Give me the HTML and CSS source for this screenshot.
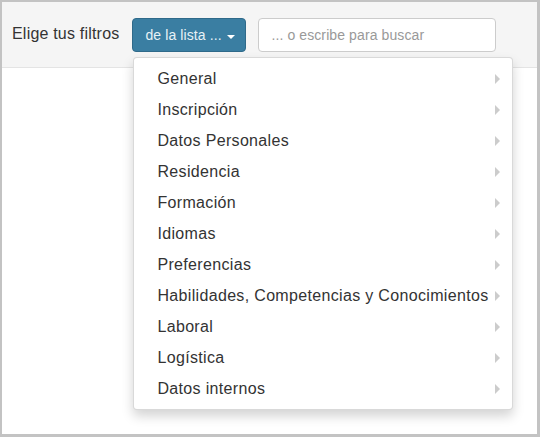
FILE: index.html
```html
<!DOCTYPE html>
<html lang="es">
<head>
<meta charset="utf-8">
<title>Filtros</title>
<link rel="stylesheet" href="styles.css">
</head>
<body>
<div class="frame">
  <div class="toolbar">
    <span class="label">Elige tus filtros</span>
    <div class="picker">
      <button class="btn" type="button">de la lista ...<span class="caret"></span></button>
      <ul class="menu">
        <li class="item"><span>General</span><span class="arrow"></span></li>
        <li class="item"><span>Inscripción</span><span class="arrow"></span></li>
        <li class="item"><span>Datos Personales</span><span class="arrow"></span></li>
        <li class="item"><span>Residencia</span><span class="arrow"></span></li>
        <li class="item"><span>Formación</span><span class="arrow"></span></li>
        <li class="item"><span>Idiomas</span><span class="arrow"></span></li>
        <li class="item"><span>Preferencias</span><span class="arrow"></span></li>
        <li class="item"><span>Habilidades, Competencias y Conocimientos</span><span class="arrow"></span></li>
        <li class="item"><span>Laboral</span><span class="arrow"></span></li>
        <li class="item"><span>Logística</span><span class="arrow"></span></li>
        <li class="item"><span>Datos internos</span><span class="arrow"></span></li>
      </ul>
    </div>
    <input class="search" type="text" placeholder="... o escribe para buscar">
  </div>
</div>
</body>
</html>
```
FILE: styles.css
```css
* { box-sizing: border-box; }
html, body { margin: 0; padding: 0; background: #fff; }
body { font-family: "Liberation Sans", Arial, sans-serif; color: #333; }
.frame {
  width: 540px;
  height: 437px;
  border: 2px solid #c3c3c3;
  border-right-width: 3px;
  border-bottom-width: 3px;
  background: #fff;
}
.toolbar {
  display: flex;
  align-items: center;
  height: 66px;
  padding: 0 10px;
  background: #f5f5f5;
  border-bottom: 1px solid #e4e4e4;
}
.label {
  font-size: 16px;
  letter-spacing: 0.2px;
  color: #333;
  margin-right: 13px;
  position: relative;
  top: -1px;
}
.picker { position: relative; margin-right: 12px; }
.btn {
  display: flex;
  align-items: center;
  height: 34px;
  width: 114px;
  padding: 0 11px 0 12px;
  font-family: "Liberation Sans", Arial, sans-serif;
  font-size: 14px;
  letter-spacing: 0.1px;
  color: #e8f1f6;
  background: #3a7ea2;
  border: 1px solid #2f6a8a;
  border-radius: 4px;
  white-space: pre;
}
.caret {
  display: inline-block;
  width: 0;
  height: 0;
  margin-left: 5px;
  margin-top: 5px;
  border-top: 4px solid #fff;
  border-left: 4px solid transparent;
  border-right: 4px solid transparent;
}
.search {
  width: 238px;
  height: 34px;
  padding: 0 12px;
  font-family: "Liberation Sans", Arial, sans-serif;
  font-size: 14px;
  letter-spacing: 0.1px;
  color: #555;
  background: #fff;
  border: 1px solid #ccc;
  border-radius: 4px;
}
.search::placeholder { color: #999; }
.menu {
  position: absolute;
  top: 39px;
  left: 1px;
  width: 380px;
  margin: 0;
  padding: 6px 0 4px;
  list-style: none;
  background: #fff;
  border: 1px solid rgba(0,0,0,.15);
  border-radius: 4px;
  box-shadow: 0 6px 12px rgba(0,0,0,.175);
  z-index: 10;
}
.item {
  display: flex;
  align-items: center;
  justify-content: space-between;
  height: 31px;
  padding: 0 12px 0 23px;
  font-size: 16px;
  letter-spacing: 0.33px;
  color: #333;
  white-space: nowrap;
}
.arrow {
  flex: none;
  width: 0;
  height: 0;
  margin-left: 2px;
  border-left: 5px solid #ccc;
  border-top: 5px solid transparent;
  border-bottom: 5px solid transparent;
}
```
